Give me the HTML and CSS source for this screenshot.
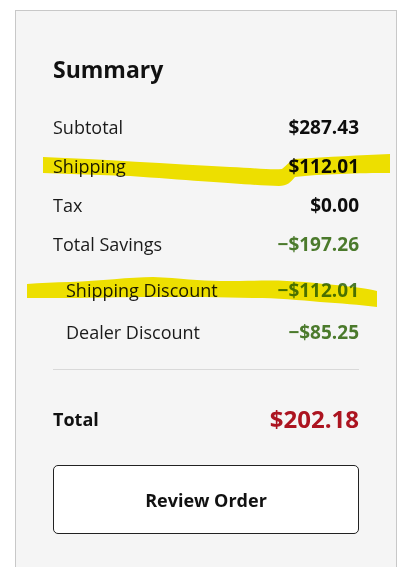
FILE: index.html
```html
<!DOCTYPE html>
<html lang="en">
<head>
    <meta charset="UTF-8">
    <meta name="viewport" content="width=device-width, initial-scale=1.0">
    <title>Summary</title>
    <link rel="stylesheet" href="styles.css">
</head>
<body>
    <div class="summary-card">
        <h2 class="summary-title">Summary</h2>

        <div class="row">
            <span class="label">Subtotal</span>
            <span class="value">$287.43</span>
        </div>
        <div class="row">
            <span class="label">Shipping</span>
            <span class="value">$112.01</span>
        </div>
        <div class="row">
            <span class="label">Tax</span>
            <span class="value">$0.00</span>
        </div>
        <div class="row">
            <span class="label">Total Savings</span>
            <span class="value savings">&minus;$197.26</span>
        </div>

        <div class="sub-rows">
            <div class="row sub">
                <span class="label">Shipping Discount</span>
                <span class="value savings">&minus;$112.01</span>
            </div>
            <div class="row sub">
                <span class="label">Dealer Discount</span>
                <span class="value savings">&minus;$85.25</span>
            </div>
        </div>

        <div class="divider"></div>

        <div class="row total-row">
            <span class="total-label">Total</span>
            <span class="total-value">$202.18</span>
        </div>

        <button class="review-btn" type="button">Review Order</button>
    </div>

    <!-- stabilo highlight di atas screenshot -->
    <svg class="highlights" width="408" height="567" viewBox="0 0 408 567">
        <path d="M43,157 C100,159 170,164 230,167 C255,168 272,170 282,169 C287,165 290,161 294,159 C330,157 360,155 390,154 L390,173 C360,173 320,174 295,177 C291,182 287,186 279,186 C250,185 200,181 130,176 C100,175 70,174 43,173 Z" />
        <path d="M27,284 C40,283 55,282 70,282 C100,281 130,277 153,277 C180,278 200,281 220,281 C250,281 270,280 287,281 C310,282 335,285 353,287 C365,288 372,290 377,291 L377,307 C360,305 340,303 320,302 C300,300 275,298 253,298 C220,297 190,297 153,297 C120,297 95,298 70,298 C55,298 40,298 27,298 Z" />
    </svg>
</body>
</html>
```

FILE: styles.css
```css
body {
    font-family: "Open Sans", Arial, sans-serif;
    background-color: #fff;
    color: #111;
    margin: 10px 11px 0 15px;
    padding: 0;
}

.summary-card {
    background-color: #f5f5f5;
    border: 1px solid #c8c8c8;
    border-bottom: none;
    padding: 42px 37px 40px 37px;
    min-height: 520px;
    box-sizing: border-box;
}

.summary-title {
    font-size: 23px;
    font-weight: 700;
    line-height: 32px;
    margin: 0 0 22px 0;
    color: #111;
}

.row {
    display: flex;
    justify-content: space-between;
    align-items: center;
    height: 39px;
}

.label {
    font-size: 18px;
    color: #1a1a1a;
}

.value {
    font-size: 19px;
    font-weight: 700;
    color: #0d0d0d;
}

.savings {
    color: #4b7a2c;
}

.sub-rows {
    margin-top: 6px;
}

.row.sub {
    height: 42px;
    padding-left: 13px;
}

.divider {
    height: 1px;
    background-color: #d9d9d9;
    margin: 16px 0 0 0;
}

.total-row {
    height: auto;
    align-items: flex-start;
    padding-top: 36px;
}

.total-label {
    font-size: 18px;
    font-weight: 700;
    line-height: 24px;
    padding-top: 1px;
}

.total-value {
    font-size: 24px;
    font-weight: 700;
    line-height: 26px;
    color: #ac1420;
}

.review-btn {
    display: block;
    width: 100%;
    height: 69px;
    margin-top: 33px;
    background-color: #fff;
    border: 1px solid #222;
    border-radius: 5px;
    font-family: "Open Sans", Arial, sans-serif;
    font-size: 18px;
    font-weight: 700;
    color: #111;
    cursor: pointer;
}

.highlights {
    position: absolute;
    top: 0;
    left: 0;
    pointer-events: none;
    mix-blend-mode: multiply;
}

.highlights path {
    fill: #f7e900;
}
```
